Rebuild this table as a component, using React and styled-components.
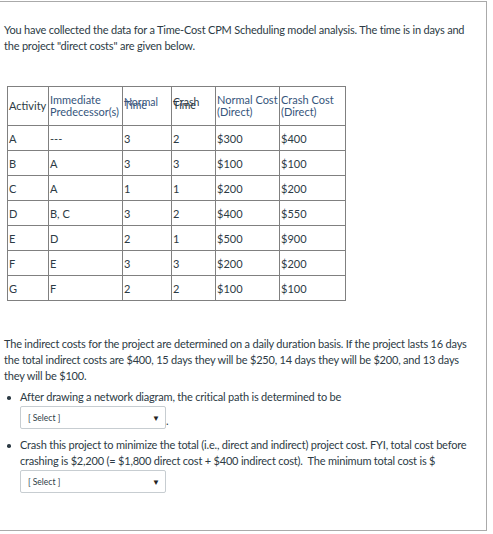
import React from 'react';
import styled, { createGlobalStyle } from 'styled-components';

const GlobalStyle = createGlobalStyle`
  body {
    margin: 0;
    background: #fff;
    font-family: Lato, "Noto Sans", sans-serif;
    color: #2d3b45;
  }
`;

const Frame = styled.div`
  box-sizing: border-box;
  margin: 1px 0 0 -2px;
  width: 489px;
  height: 530px;
  border: 1px solid #aaaaaa;
  padding: 20px 5px 0 5px;
  font-size: 11px;
`;

const Para = styled.p`
  margin: ${(p) => (p.$gap ? `${p.$gap}px 0 0` : '0')};
  line-height: 16px;
  letter-spacing: -0.2px;
`;

const Table = styled.table`
  margin: 32px 0 0 3px;
  border-collapse: collapse;
  table-layout: fixed;
  width: 339px;
`;

const Cell = styled.td`
  border: 1px solid #808080;
  padding: 0 1px;
  height: 24px;
  vertical-align: middle;
  line-height: 13px;
  color: ${(p) => (p.$tint ? '#36557c' : '#2d3b45')};
`;

const HeadCell = styled(Cell)`
  height: 38px;
  line-height: 12px;
`;

const Squashed = styled.div`
  line-height: 3px;
  font-size: 10.5px;
  padding-bottom: 4px;
`;

const List = styled.ul`
  margin: 5px 0 0 0;
  padding-left: 16px;
  list-style: none;
  letter-spacing: -0.2px;
`;

const Item = styled.li`
  position: relative;
  line-height: 16px;
  margin-bottom: 8px;
  &::before {
    content: '';
    position: absolute;
    left: -13px;
    top: 7px;
    width: 3.5px;
    height: 3.5px;
    border-radius: 50%;
    background: #2d3b45;
  }
`;

const Select = styled.span`
  display: inline-flex;
  align-items: center;
  justify-content: space-between;
  box-sizing: border-box;
  width: 146px;
  height: 23px;
  margin: 1px 0 0 0;
  padding: 0 5px 0 7px;
  border: 1px solid #c7cdd1;
  border-radius: 2px;
  background: #fff;
  font-size: 8.5px;
  letter-spacing: 0;
  color: #2d3b45;
  vertical-align: bottom;
`;

const Arrow = styled.span`
  font-size: 8px;
  color: #222;
`;

const rows = [
  ['A', '---', '3', '2', '$300', '$400'],
  ['B', 'A', '3', '3', '$100', '$100'],
  ['C', 'A', '1', '1', '$200', '$200'],
  ['D', 'B, C', '3', '2', '$400', '$550'],
  ['E', 'D', '2', '1', '$500', '$900'],
  ['F', 'E', '3', '3', '$200', '$200'],
  ['G', 'F', '2', '2', '$100', '$100'],
];

const widths = [41, 74, 49, 44, 64, 66];

function Dropdown() {
  return (
    <Select>
      <span>[ Select ]</span>
      <Arrow>▼</Arrow>
    </Select>
  );
}

export default function App() {
  return (
    <>
      <GlobalStyle />
      <Frame>
        <Para>
          You have collected the data for a Time-Cost CPM Scheduling model analysis. The time is in days and
          the project "direct costs" are given below.
        </Para>
        <Table>
          <colgroup>
            {widths.map((w, i) => (
              <col key={i} style={{ width: w }} />
            ))}
          </colgroup>
          <tbody>
            <tr>
              <HeadCell>Activity</HeadCell>
              <HeadCell $tint>Immediate<br />Predecessor(s)</HeadCell>
              <HeadCell $tint>
                <Squashed>Normal<br />Time</Squashed>
              </HeadCell>
              <HeadCell>
                <Squashed>Crash<br />Time</Squashed>
              </HeadCell>
              <HeadCell $tint>Normal Cost<br />(Direct)</HeadCell>
              <HeadCell $tint>Crash Cost<br />(Direct)</HeadCell>
            </tr>
            {rows.map((r) => (
              <tr key={r[0]}>
                {r.map((v, i) => (
                  <Cell key={i}>{v}</Cell>
                ))}
              </tr>
            ))}
          </tbody>
        </Table>
        <Para $gap={35}>
          The indirect costs for the project are determined on a daily duration basis. If the project lasts 16 days
          the total indirect costs are $400, 15 days they will be $250, 14 days they will be $200, and 13 days
          they will be $100.
        </Para>
        <List>
          <Item>
            After drawing a network diagram, the critical path is determined to be
            <br />
            <Dropdown />.
          </Item>
          <Item>
            Crash this project to minimize the total (i.e., direct and indirect) project cost. FYI, total cost before
            crashing is $2,200 (= $1,800 direct cost + $400 indirect cost).&nbsp; The minimum total cost is $
            <br />
            <Dropdown />
          </Item>
        </List>
      </Frame>
    </>
  );
}
